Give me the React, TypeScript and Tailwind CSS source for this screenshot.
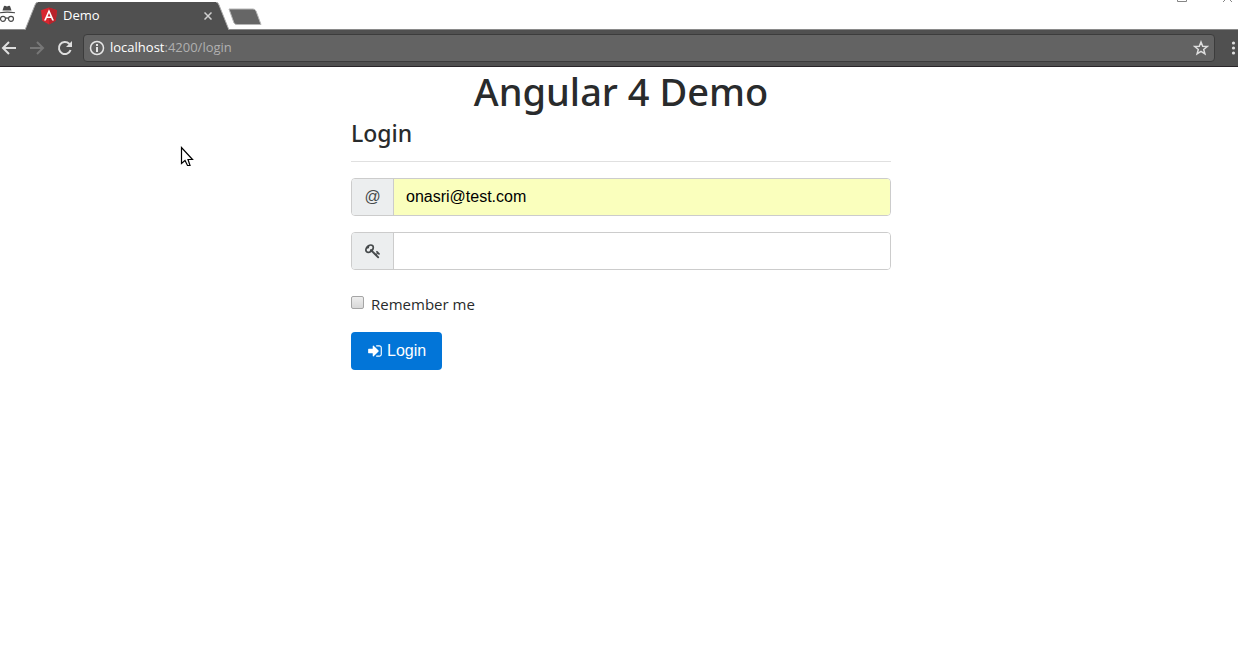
import { useState } from "react";

function IncognitoIcon() {
  return (
    <svg viewBox="0 0 16 18" className="h-[18px] w-4 shrink-0 fill-[#4a4a4a]" aria-hidden="true">
      <path d="M3.800 2.400Q4.200 1.600 5 1.800L7 2.400 9 1.800Q9.800 1.600 10.200 2.400L11.500 6.600H2.500z" />
      <path d="M0 8.200Q7 6.800 15 8.200V9.200Q7 8.200 0 9.200z" />
      <g fill="none" stroke="#4a4a4a" strokeWidth="1.2">
        <circle cx="3" cy="14.800" r="2.500" />
        <circle cx="11" cy="14.800" r="2.500" />
        <path d="M5.500 14.400Q7 13.400 8.500 14.400" />
      </g>
    </svg>
  );
}

function AngularIcon() {
  return (
    <svg viewBox="25 25 200 210" className="size-[18px] shrink-0" aria-hidden="true">
      <path fill="#d8262f" d="M125 30 31.900 63.200l14.200 123.100L125 230l78.900-43.700 14.200-123.100z" />
      <path fill="#b8232b" d="M125 30v200l78.900-43.700 14.200-123.100z" />
      <path
        fill="#fff"
        d="M125 52.100 66.800 182.600h21.700l11.700-29.200h49.400l11.700 29.200H183zm17 83.300h-34l17-40.900z"
      />
    </svg>
  );
}

function KeyIcon() {
  return (
    <svg viewBox="0 0 1792 1792" className="size-4 fill-current" aria-hidden="true">
      <path d="M832 512q0-80-56-136t-136-56-136 56-56 136q0 42 19 83-41-19-83-19-80 0-136 56t-56 136 56 136 136 56 136-56 56-136q0-42-19-83 41 19 83 19 80 0 136-56t56-136zm851 704q0 17-49 66t-66 49q-9 0-28.500-16t-36.500-33-38.500-40-24.500-26l-96 96 220 220q28 28 28 68 0 42-39 81t-81 39q-40 0-68-28l-671-671q-176 131-365 131-163 0-265.500-102.500t-102.500-265.500q0-160 95-313t248-248 313-95q163 0 265.500 102.500t102.500 265.500q0 189-131 365l355 355 96-96q-3-3-26-24.500t-40-38.500-33-36.500-16-28.500q0-17 49-66t66-49q13 0 23 10 6 6 46 44.500t82 79.500 86.500 86 73 78 28.500 41z" />
    </svg>
  );
}

function SignInIcon() {
  return (
    <svg viewBox="0 0 1792 1792" className="size-4 fill-current" aria-hidden="true">
      <path d="M1312 896q0 26-19 45l-544 544q-19 19-45 19t-45-19-19-45v-288h-448q-26 0-45-19t-19-45v-384q0-26 19-45t45-19h448v-288q0-26 19-45t45-19 45 19l544 544q19 19 19 45zm352-352v704q0 119-84.500 203.500t-203.500 84.500h-320q-13 0-22.500-9.500t-9.500-22.500q0-4-1-20t-.5-26.500 3-23.500 10-19.500 20.500-6.500h320q66 0 113-47t47-113v-704q0-66-47-113t-113-47h-312l-11.500-1-11.500-3-8-5.500-7-9-2-13.500q0-4-1-20t-.5-26.500 3-23.500 10-19.500 20.500-6.500h320q119 0 203.500 84.500t84.500 203.500z" />
    </svg>
  );
}

function TabStrip() {
  return (
    <div className="relative flex h-[30px] items-end border-b border-[#8a8a8a] bg-white">
      <div className="flex h-full w-6 items-start pt-1">
        <IncognitoIcon />
      </div>
      <div className="-mb-px flex h-7 items-stretch">
        <svg viewBox="0 0 14 28" className="h-7 w-[14px]" aria-hidden="true">
          <path d="M1 28 11 3Q12 0 14 0V28z" fill="#505050" />
          <path d="M1 28 11 3Q12 0 14 0" fill="none" stroke="#aaa" />
        </svg>
        <div className="flex w-[178px] items-center bg-[#505050] pl-[2px] text-[13px] text-white">
          <AngularIcon />
          <span className="ml-[5px] flex-1">Demo</span>
          <button type="button" aria-label="Close tab" className="flex size-4 items-center justify-center">
            <svg viewBox="0 0 8 8" className="size-2 stroke-[#d0d0d0] stroke-[1.500]" aria-hidden="true">
              <path d="M.5.5l7 7M7.500.5l-7 7" />
            </svg>
          </button>
        </div>
        <svg viewBox="0 0 14 28" className="h-7 w-[14px]" aria-hidden="true">
          <path d="M0 0Q2 0 3 3L13 28H0z" fill="#505050" />
          <path d="M0 0Q2 0 3 3L13 28" fill="none" stroke="#aaa" />
        </svg>
      </div>
      <button type="button" aria-label="New tab" className="mb-[3px] -ml-[3px]">
        <svg viewBox="0 0 36 18" className="h-[18px] w-9" aria-hidden="true">
          <path d="M2 1H26Q28 1 29 3L34 16.500H10Q8 16.500 7 15z" fill="#666" stroke="#b5b5b5" />
        </svg>
      </button>
      <svg viewBox="0 0 60 6" className="absolute top-0 right-1 h-[6px] w-[60px]" fill="none" stroke="#858585" aria-hidden="true">
        <path d="M3.500 0V1.500H12.500V0M49 2l3-3M58 2l-3-3" />
      </svg>
    </div>
  );
}

function Toolbar() {
  return (
    <div className="flex h-[37px] items-center border-b border-[#292529] bg-[#505050] pr-px">
      <button type="button" aria-label="Back" className="w-7">
        <svg viewBox="0 0 18 16" className="h-4 w-[18px]" fill="none" stroke="#dedede" strokeWidth="2" aria-hidden="true">
          <path d="M16 8H3M9 2 3 8l6 6" />
        </svg>
      </button>
      <button type="button" aria-label="Forward" className="w-7">
        <svg viewBox="0 0 18 16" className="h-4 w-[18px]" fill="none" stroke="#777" strokeWidth="2" aria-hidden="true">
          <path d="M2 8H15M9 2l6 6-6 6" />
        </svg>
      </button>
      <button type="button" aria-label="Reload" className="w-[27px]">
        <svg viewBox="0 0 18 16" className="h-4 w-[18px]" fill="none" stroke="#dedede" strokeWidth="2" aria-hidden="true">
          <path d="M14.600 10A6 6 0 1 1 13.200 3.800L14.500 5" />
          <path d="M16 1V7H10z" fill="#dedede" stroke="none" />
        </svg>
      </button>
      <div className="flex h-7 flex-1 items-center rounded-sm border border-[#3c3c3c] bg-[#636363] pr-[5px] pl-[5px] text-[13px]">
        <svg viewBox="0 0 16 16" className="size-4" aria-hidden="true">
          <circle cx="8" cy="8" r="6.500" fill="none" stroke="#e6e6e6" strokeWidth="1.5" />
          <path d="M7 4h2v2H7zM7 7h2v5H7z" fill="#e6e6e6" />
        </svg>
        <div className="ml-[5px] flex-1 text-[#b0b0b0]">
          <span className="text-white">localhost</span>:4200/login
        </div>
        <button type="button" aria-label="Bookmark this page">
          <svg viewBox="0 0 16 16" className="size-4" fill="none" stroke="#dedede" strokeWidth="1.5" aria-hidden="true">
            <path d="m8 2 1.700 4.200 4.500.3-3.500 2.900 1.200 4.400L8 11.300l-3.900 2.500 1.200-4.400-3.500-2.900 4.500-.3z" />
          </svg>
        </button>
      </div>
      <button type="button" aria-label="Menu" className="ml-4">
        <svg viewBox="0 0 6 16" className="h-4 w-[6px] fill-[#dedede]" aria-hidden="true">
          <circle cx="2.500" cy="3" r="1.600" />
          <circle cx="2.500" cy="8" r="1.600" />
          <circle cx="2.500" cy="13" r="1.600" />
        </svg>
      </button>
    </div>
  );
}

export default function App() {
  const [email, setEmail] = useState("onasri@test.com");
  const [password, setPassword] = useState("");

  return (
    <div className="relative min-h-screen bg-white font-['Open_Sans',sans-serif] text-[#292b2c]">
      <header>
        <TabStrip />
        <Toolbar />
      </header>
      <main className="pl-1">
        <h1 className="mt-[2px] mb-[7px] text-center font-['Noto_Sans',sans-serif] text-[38px] leading-[44px] font-medium">
          Angular 4 Demo
        </h1>
        <form className="mx-auto max-w-[540px]" onSubmit={(e) => e.preventDefault()}>
          <h2 className="font-['Noto_Sans',sans-serif] text-[23px] leading-[26px] font-medium">Login</h2>
          <hr className="mt-[15px] mb-4 border-[#e0e0e0]" />
          <div className="mb-4 flex h-[38px] overflow-hidden rounded border border-[#ccc]">
            <label
              htmlFor="email"
              className="flex w-[42px] items-center justify-center border-r border-[#ccc] bg-[#eceeef] font-['Liberation_Sans',sans-serif] text-base text-[#464a4c]"
            >
              @
            </label>
            <input
              id="email"
              type="email"
              aria-label="Email"
              value={email}
              onChange={(e) => setEmail(e.target.value)}
              className="min-w-0 flex-1 bg-[#faffbd] px-3 font-['Liberation_Sans',sans-serif] text-base text-black outline-none"
            />
          </div>
          <div className="flex h-[38px] overflow-hidden rounded border border-[#ccc]">
            <label
              htmlFor="password"
              className="flex w-[42px] items-center justify-center border-r border-[#ccc] bg-[#eceeef] text-[#464a4c]"
            >
              <KeyIcon />
            </label>
            <input
              id="password"
              type="password"
              aria-label="Password"
              value={password}
              onChange={(e) => setPassword(e.target.value)}
              className="min-w-0 flex-1 bg-white px-3 text-base outline-none"
            />
          </div>
          <div className="mt-[22px] mb-4 flex items-start">
            <input
              id="remember"
              type="checkbox"
              className="mt-1 size-[13px] appearance-none rounded-xs border border-[#a5a5a5] bg-linear-to-b from-[#eee] to-[#d8d8d8] checked:bg-[#0275d8]"
            />
            <label htmlFor="remember" className="pl-[7px] text-[15px] leading-6">
              Remember me
            </label>
          </div>
          <button
            type="submit"
            className="flex h-[38px] items-center gap-1 rounded bg-[#0275d8] px-4 font-['Liberation_Sans',sans-serif] text-base text-white"
          >
            <SignInIcon />
            Login
          </button>
        </form>
      </main>
      <svg viewBox="0 0 14 21" className="absolute top-[146px] left-[180px] h-[21px] w-[14px]" aria-hidden="true">
        <path d="M1.500 1.500V17.500L5 14.500 7.500 19.500H10L8 13.500H12.500z" fill="#fff" stroke="#000" strokeWidth="1.200" />
      </svg>
    </div>
  );
}
